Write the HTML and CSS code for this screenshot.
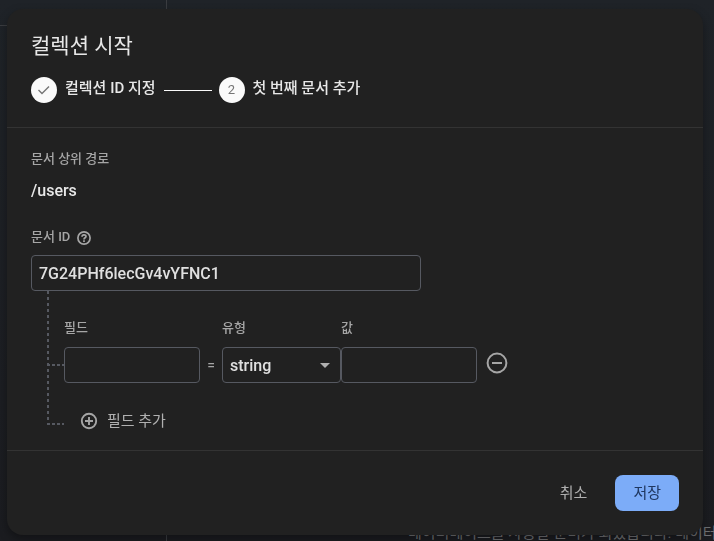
FILE: index.html
```html
<!DOCTYPE html>
<html lang="ko">
<head>
    <meta charset="UTF-8">
    <meta name="viewport" content="width=device-width, initial-scale=1.0">
    <title>컬렉션 시작</title>
    <link rel="stylesheet" href="styles.css">
</head>
<body>
    <!-- console page behind the dialog -->
    <div class="backdrop" aria-hidden="true">
        <div class="backdrop-side"></div>
        <div class="backdrop-main">데이터베이스를 사용할 준비가 되었습니다. 데이터</div>
    </div>

    <form class="dialog">
        <header class="dialog-header">
            <h1>컬렉션 시작</h1>
            <ol class="steps">
                <li class="step">
                    <span class="step-icon">
                        <svg width="16" height="16" viewBox="0 0 16 16" fill="none" stroke="#757575" stroke-width="1.4">
                            <path d="M2.5 8 L6 11.5 L13 4.5"/>
                        </svg>
                    </span>
                    <span class="step-text">컬렉션 ID 지정</span>
                </li>
                <li class="step-line"></li>
                <li class="step">
                    <span class="step-icon">2</span>
                    <span class="step-text">첫 번째 문서 추가</span>
                </li>
            </ol>
        </header>

        <div class="dialog-body">
            <div class="label">문서 상위 경로</div>
            <div class="path">/users</div>

            <div class="label-row">
                <label class="label" for="docId">문서 ID</label>
                <svg width="16" height="16" viewBox="0 0 16 16" fill="none" stroke="#a6a6a6" stroke-width="1.7">
                    <circle cx="8" cy="9" r="6.1"/>
                    <path d="M6 7.8 C6 5.2 10 5.2 10 7.5 C10 8.8 8 8.8 8 10.4 M8 11.3 V12.9"/>
                </svg>
            </div>
            <input class="box doc-id" id="docId" type="text" value="7G24PHf6lecGv4vYFNC1">

            <div class="tree">
                <div class="field-grid">
                    <label class="label name-label" for="fieldName">필드</label>
                    <label class="label type-label" for="fieldType">유형</label>
                    <label class="label value-label" for="fieldValue">값</label>
                    <span class="branch"></span>
                    <input class="box" id="fieldName" type="text">
                    <span class="equals">=</span>
                    <div class="select-wrap">
                        <select class="box" id="fieldType">
                            <option>string</option>
                            <option>number</option>
                            <option>boolean</option>
                        </select>
                        <span class="arrow"></span>
                    </div>
                    <input class="box" id="fieldValue" type="text">
                    <button type="button" class="icon-button" aria-label="필드 삭제">
                        <svg width="24" height="24" viewBox="0 0 24 24" fill="none" stroke="#a6a6a6" stroke-width="2">
                            <circle cx="12" cy="12" r="9.4"/>
                            <path d="M7 12 H17"/>
                        </svg>
                    </button>
                </div>
                <div class="add-row">
                    <span class="branch"></span>
                    <button type="button" class="add-button">
                        <svg width="18" height="18" viewBox="0 0 18 18" fill="none" stroke="#a6a6a6" stroke-width="1.9">
                            <circle cx="9" cy="9" r="7.2"/>
                            <path d="M5 9 H13 M9 5 V13"/>
                        </svg>
                        필드 추가
                    </button>
                </div>
            </div>
        </div>

        <footer class="dialog-footer">
            <button type="button" class="cancel">취소</button>
            <button type="submit" class="save">저장</button>
        </footer>
    </form>
</body>
</html>
```
FILE: styles.css
```css
* {
    box-sizing: border-box;
}

body {
    margin: 0;
    padding: 9px 11px 6px 7px;
    background-color: #1e2226;
    color: #e8e8e8;
    font-family: Roboto, "Noto Sans CJK KR", sans-serif;
    font-size: 15px;
    line-height: 20px;
}

.backdrop {
    position: fixed;
    inset: 0;
    display: flex;
    overflow: hidden;
    background: linear-gradient(#1f2328, #1b1c20);
}

.backdrop-side {
    flex: 0 0 167px;
    border-right: 1px solid #3a3c40;
    background: linear-gradient(#3a3c40, #3a3c40) 0 25px / 100% 1px no-repeat;
}

.backdrop-main {
    align-self: flex-end;
    padding-left: 241px;
    color: #6f7073;
    font-size: 15px;
    line-height: 16px;
    white-space: nowrap;
}

.dialog {
    position: relative;
    border-radius: 16px;
    background-color: #212121;
    box-shadow: 0 4px 10px rgba(0, 0, 0, 0.35);
}

.dialog-header {
    padding: 23px 24px 24px;
    border-bottom: 1px solid #333;
}

h1 {
    margin: 0 0 17px;
    font-size: 21px;
    font-weight: 400;
    line-height: 28px;
}

.steps {
    display: flex;
    align-items: center;
    margin: 0;
    padding: 0;
    list-style: none;
    font-weight: 500;
}

.step {
    display: flex;
    align-items: center;
    gap: 8px;
}

.step-icon {
    display: flex;
    align-items: center;
    justify-content: center;
    width: 26px;
    height: 26px;
    border-radius: 50%;
    background-color: #fafafa;
    color: #757575;
    font-size: 13px;
    font-weight: 400;
}

.step-text {
    padding-bottom: 4px;
}

.step-line {
    width: 48px;
    height: 1px;
    margin: 0 7px 0 8px;
    background-color: #fafafa;
}

.dialog-body {
    padding: 21px 24px 17px;
}

.label {
    color: #a6a6a6;
    font-size: 13px;
    font-weight: 500;
}

.path {
    margin: 12px 0 26px;
    font-size: 16px;
    font-weight: 500;
}

.label-row {
    display: flex;
    align-items: center;
    gap: 6px;
    margin-bottom: 8px;
}

.box {
    display: block;
    width: 100%;
    height: 36px;
    padding: 0 7px;
    border: 1px solid #565961;
    border-radius: 4px;
    background-color: transparent;
    color: #e0e0e0;
    font-family: inherit;
    font-size: 16px;
    font-weight: 500;
}

.doc-id {
    max-width: 390px;
}

/* dashed guide running down from the document id */
.tree {
    margin-left: 16px;
    background: repeating-linear-gradient(#565961 0 3px, transparent 3px 6px) 0 0 / 2px 132px no-repeat;
}

.field-grid {
    display: grid;
    grid-template-columns: 17px 136px 22px 119px 136px auto;
    justify-content: start;
    align-items: center;
    row-gap: 9px;
    padding-top: 27px;
}

.name-label {
    grid-column: 2;
}

.type-label {
    grid-column: 4;
}

.value-label {
    grid-column: 5 / 7;
}

.branch {
    width: 17px;
    height: 2px;
    background: repeating-linear-gradient(90deg, #565961 0 3px, transparent 3px 5px);
}

.add-row .branch {
    margin-top: 6px;
}

.equals {
    color: #a6a6a6;
    font-size: 14px;
    text-align: center;
}

.select-wrap {
    position: relative;
}

select.box {
    appearance: none;
}

.arrow {
    position: absolute;
    top: 16px;
    right: 11px;
    border: 5px solid transparent;
    border-top-color: #b0b0b0;
    border-bottom: 0;
    pointer-events: none;
}

button {
    border: none;
    background: none;
    color: #b0b0b0;
    font-family: inherit;
    font-size: 15px;
    line-height: 20px;
    cursor: pointer;
}

.icon-button {
    display: flex;
    padding: 0 8px 4px;
}

.add-row {
    display: flex;
    align-items: center;
    margin-top: 26px;
}

.add-button {
    display: flex;
    align-items: center;
    gap: 9px;
    padding: 2px 16px;
}

.dialog-footer {
    display: flex;
    justify-content: flex-end;
    gap: 10px;
    padding: 24px;
    border-top: 1px solid #333;
}

.cancel,
.save {
    height: 36px;
    padding: 0 18px;
}

.save {
    border-radius: 8px;
    background-color: #7cacf8;
    color: #1f3760;
}
```
